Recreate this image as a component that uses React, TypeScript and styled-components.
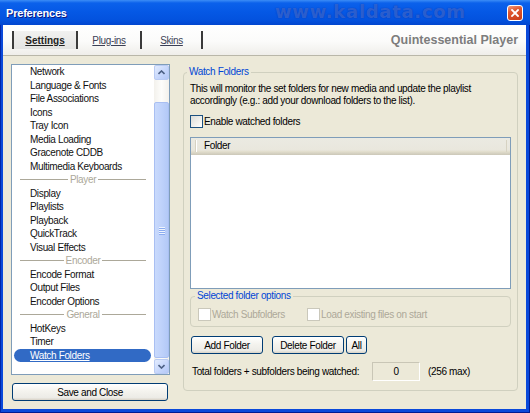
import React from "react";
import styled, { createGlobalStyle, css } from "styled-components";

const uiFont = css`
  font-family: "Liberation Sans", Arial, sans-serif;
  font-size: 10px;
  letter-spacing: -0.35px;
`;

const GlobalStyle = createGlobalStyle`
  html, body { margin: 0; padding: 0; background: #ffffff; }
  #root { width: 530px; height: 413px; overflow: hidden; }
  *, *::before, *::after { box-sizing: border-box; }
`;

/* ---------- window frame ---------- */

const Window = styled.div`
  width: 530px;
  height: 413px;
  display: flex;
  flex-direction: column;
  background: #0A49DA;
  box-shadow: inset 1px 0 0 #0026a8, inset -1px 0 0 #001b91, inset 0 -1px 0 #001b91;
`;

const TitleBar = styled.div`
  position: relative;
  flex: none;
  height: 25px;
  display: flex;
  align-items: center;
  padding: 0 7px 0 6px;
  background: linear-gradient(
    180deg,
    #3c8df6 0px,
    #0b61eb 3px,
    #0558e5 12px,
    #0352de 20px,
    #0246cf 25px
  );
  overflow: hidden;
`;

const TitleText = styled.span`
  font-family: "Liberation Sans", Arial, sans-serif;
  font-weight: bold;
  font-size: 11px;
  letter-spacing: -0.2px;
  color: #ffffff;
  text-shadow: 1px 1px 0 #0a1883;
`;

const Watermark = styled.span`
  position: absolute;
  left: 275px;
  top: 1px;
  font-family: "DejaVu Sans", Verdana, sans-serif;
  font-weight: bold;
  font-size: 18px;
  letter-spacing: 0.7px;
  color: rgba(80, 135, 240, 0.55);
  text-shadow: 0 0 1px rgba(0, 30, 140, 0.7);
  pointer-events: none;
`;

const CloseButton = styled.button`
  margin-left: auto;
  width: 16px;
  height: 16px;
  padding: 0;
  border: 1px solid #ffffff;
  border-radius: 3px;
  background: linear-gradient(160deg, #f39b7e 0%, #e0582f 35%, #c93b17 100%);
  display: flex;
  align-items: center;
  justify-content: center;
`;

const Client = styled.div`
  flex: 1;
  min-height: 0;
  margin: 0 4px 4px 3px;
  display: flex;
  flex-direction: column;
`;

/* ---------- header with tabs ---------- */

const Header = styled.div`
  flex: none;
  height: 31px;
  display: flex;
  align-items: center;
  padding: 0 8px 0 9px;
  background: linear-gradient(180deg, #ffffff 0%, #fbfbfa 55%, #efeeea 100%);
  border-bottom: 1px solid #b9b7a9;
`;

const TabStrip = styled.div`
  display: flex;
  height: 18px;
  border-right: 2px solid #3a3a3a;
`;

const Tab = styled.a<{ $active?: boolean; $w: number }>`
  width: ${(p) => p.$w}px;
  height: 18px;
  display: flex;
  align-items: center;
  justify-content: center;
  border-left: 2px solid #3a3a3a;
  ${uiFont};
  color: ${(p) => (p.$active ? "#222222" : "#3b3f55")};
  font-weight: ${(p) => (p.$active ? "bold" : "normal")};
  letter-spacing: ${(p) => (p.$active ? "0" : "-0.35px")};
  text-decoration: underline;
  background: ${(p) =>
    p.$active ? "linear-gradient(180deg, #f1f1f0 0%, #e4e4e2 100%)" : "transparent"};
`;

const Brand = styled.span`
  margin-left: auto;
  font-family: "Liberation Sans", Arial, sans-serif;
  font-weight: bold;
  font-size: 12.5px;
  color: #7d7d7d;
`;

/* ---------- body ---------- */

const Body = styled.div`
  flex: 1;
  min-height: 0;
  display: flex;
  gap: 13px;
  padding: 8px;
  background: #ece9d8;
`;

const LeftColumn = styled.div`
  width: 159px;
  flex: none;
  display: flex;
  flex-direction: column;
  gap: 8px;
`;

const ListBox = styled.div`
  height: 311px;
  display: flex;
  border: 1px solid #7f9db9;
  background: #ffffff;
`;

const Rows = styled.div`
  flex: 1;
  min-width: 0;
  display: flex;
  flex-direction: column;
`;

const Item = styled.div<{ $selected?: boolean }>`
  height: 13.5px;
  line-height: 13.5px;
  margin: 0 3px 0 2px;
  padding-left: 16px;
  border-radius: 7px;
  white-space: nowrap;
  ${uiFont};
  color: ${(p) => (p.$selected ? "#ffffff" : "#111111")};
  background: ${(p) => (p.$selected ? "#316ac5" : "transparent")};
  text-decoration: ${(p) => (p.$selected ? "underline" : "none")};
`;

const SectionLabel = styled.div`
  height: 13.5px;
  margin: 0 8px;
  display: flex;
  align-items: center;
  gap: 2px;
  ${uiFont};
  color: #aca899;
  &::before,
  &::after {
    content: "";
    flex: 1;
    height: 1px;
    background: #aca899;
  }
`;

/* scroll bar */

const ScrollBar = styled.div`
  width: 15px;
  flex: none;
  display: flex;
  flex-direction: column;
  background: linear-gradient(90deg, #f3f1ec 0%, #fdfdfb 50%, #f3f1ec 100%);
`;

const ArrowButton = styled.div`
  height: 15px;
  flex: none;
  display: flex;
  align-items: center;
  justify-content: center;
  border: 1px solid #b9cbf3;
  border-radius: 2px;
  background: linear-gradient(135deg, #e3ecfe 0%, #c4d5fb 60%, #b4c8f6 100%);
`;

const ScrollTrack = styled.div`
  flex: 1;
  display: flex;
  flex-direction: column;
  padding: 22px 0 1px;
`;

const Thumb = styled.div`
  flex: 1;
  display: flex;
  flex-direction: column;
  align-items: center;
  justify-content: center;
  gap: 1px;
  border: 1px solid #a9bff2;
  border-radius: 2px;
  background: linear-gradient(90deg, #c9dafc 0%, #bfd2fb 50%, #b3c9f7 100%);
`;

const Grip = styled.span`
  width: 6px;
  height: 1px;
  background: #eef4fe;
  box-shadow: 0 1px 0 #8cacf0;
`;

/* push buttons */

const PushButton = styled.button<{ $w: number }>`
  width: ${(p) => p.$w}px;
  height: 18px;
  flex: none;
  padding: 0;
  border: 1px solid #003c74;
  border-radius: 3px;
  background: linear-gradient(180deg, #ffffff 0%, #f4f3ee 45%, #ecebe6 85%, #d8d2c6 100%);
  ${uiFont};
  color: #000000;
`;

const SaveButton = styled(PushButton)`
  margin-left: 1px;
`;

/* group boxes */

const GroupBox = styled.fieldset`
  flex: 1;
  min-width: 0;
  height: 325px;
  margin: 2px 0 0 0;
  padding: 0 6px;
  border: 1px solid #d0d0bf;
  border-radius: 4px;
  display: flex;
  flex-direction: column;
`;

const Legend = styled.legend`
  margin-left: -3px;
  padding: 0 2px;
  line-height: 12px;
  ${uiFont};
  color: #0046d5;
`;

const Description = styled.p`
  margin: 5px 0 0;
  line-height: 12px;
  ${uiFont};
  color: #000000;
`;

const CheckRow = styled.label<{ $disabled?: boolean }>`
  display: flex;
  align-items: center;
  gap: 1px;
  height: 13px;
  ${uiFont};
  color: ${(p) => (p.$disabled ? "#aca899" : "#000000")};
  white-space: nowrap;
`;

const EnableRow = styled(CheckRow)`
  margin-top: 8px;
`;

const CheckBox = styled.span<{ $disabled?: boolean }>`
  width: 13px;
  height: 13px;
  flex: none;
  border: 1px solid ${(p) => (p.$disabled ? "#cac8bb" : "#1c5180")};
  background: ${(p) =>
    p.$disabled ? "#ffffff" : "linear-gradient(135deg, #dcdcd7 0%, #f5f5f2 70%, #ffffff 100%)"};
`;

const FolderList = styled.div`
  margin-top: 9px;
  height: 152px;
  flex: none;
  border: 1px solid #7f9db9;
  background: #ffffff;
`;

const ListHeader = styled.div`
  height: 17px;
  display: flex;
  align-items: center;
  padding: 0 3px 0 4px;
  background: linear-gradient(180deg, #ebeae2 0%, #e9e7dd 70%, #e2decd 80%, #d6d2c2 90%, #cbc7b8 100%);
`;

const ColumnHead = styled.div`
  flex: 1;
  height: 12px;
  margin-bottom: 2px;
  display: flex;
  align-items: center;
  padding-left: 8px;
  border-left: 1px solid #d6d2c2;
  border-right: 1px solid #d6d2c2;
  box-shadow: inset 1px 0 0 #ffffff;
  ${uiFont};
  color: #000000;
`;

const SubGroup = styled.fieldset`
  margin: 1px 0 0;
  padding: 0 7px 5px;
  border: 1px solid #d0d0bf;
  border-radius: 4px;
  min-width: 0;
`;

const SubGrid = styled.div`
  margin-top: 6px;
  display: grid;
  grid-template-columns: 109px auto;
`;

const ButtonRow = styled.div`
  margin-top: 9px;
  padding-left: 1px;
  display: flex;
  align-items: center;
`;

const DeleteButton = styled(PushButton)`
  margin-left: 9px;
`;

const AllButton = styled(PushButton)`
  margin-left: 2px;
`;

const TotalRow = styled.div`
  margin-top: 8px;
  display: flex;
  align-items: center;
  ${uiFont};
  color: #000000;
`;

const TotalLabel = styled.span`
  width: 182px;
  padding-left: 2px;
  white-space: nowrap;
`;

const CountBox = styled.div`
  width: 48px;
  height: 19px;
  display: flex;
  align-items: center;
  justify-content: center;
  border: 1px solid;
  border-color: #c9c6b6 #ffffff #ffffff #c9c6b6;
  background: #ece9d8;
`;

const MaxNote = styled.span`
  margin-left: 8px;
`;

/* ---------- data ---------- */

type Entry = { label: string; section?: boolean; selected?: boolean };

const entries: Entry[] = [
  { label: "Network" },
  { label: "Language & Fonts" },
  { label: "File Associations" },
  { label: "Icons" },
  { label: "Tray Icon" },
  { label: "Media Loading" },
  { label: "Gracenote CDDB" },
  { label: "Multimedia Keyboards" },
  { label: "Player", section: true },
  { label: "Display" },
  { label: "Playlists" },
  { label: "Playback" },
  { label: "QuickTrack" },
  { label: "Visual Effects" },
  { label: "Encoder", section: true },
  { label: "Encode Format" },
  { label: "Output Files" },
  { label: "Encoder Options" },
  { label: "General", section: true },
  { label: "HotKeys" },
  { label: "Timer" },
  { label: "Watch Folders", selected: true },
];

const Chevron = ({ up }: { up?: boolean }) => (
  <svg width="7" height="5" viewBox="0 0 7 5">
    <polyline
      points={up ? "0.5,4 3.5,1 6.5,4" : "0.5,1 3.5,4 6.5,1"}
      fill="none"
      stroke="#4d6185"
      strokeWidth="1.6"
    />
  </svg>
);

export default function App() {
  return (
    <>
      <GlobalStyle />
      <Window>
        <TitleBar>
          <TitleText>Preferences</TitleText>
          <Watermark>www.kaldata.com</Watermark>
          <CloseButton aria-label="Close">
            <svg width="8" height="8" viewBox="0 0 8 8">
              <path d="M1 1 L7 7 M7 1 L1 7" stroke="#ffffff" strokeWidth="1.8" strokeLinecap="square" />
            </svg>
          </CloseButton>
        </TitleBar>

        <Client>
          <Header>
            <TabStrip>
              <Tab $active $w={64}>Settings</Tab>
              <Tab $w={64}>Plug-ins</Tab>
              <Tab $w={61}>Skins</Tab>
            </TabStrip>
            <Brand>Quintessential Player</Brand>
          </Header>

          <Body>
            <LeftColumn>
              <ListBox>
                <Rows>
                  {entries.map((e) =>
                    e.section ? (
                      <SectionLabel key={e.label}>{e.label}</SectionLabel>
                    ) : (
                      <Item key={e.label} $selected={e.selected}>
                        {e.label}
                      </Item>
                    )
                  )}
                </Rows>
                <ScrollBar>
                  <ArrowButton>
                    <Chevron up />
                  </ArrowButton>
                  <ScrollTrack>
                    <Thumb>
                      <Grip />
                      <Grip />
                      <Grip />
                      <Grip />
                    </Thumb>
                  </ScrollTrack>
                  <ArrowButton>
                    <Chevron />
                  </ArrowButton>
                </ScrollBar>
              </ListBox>
              <SaveButton $w={156}>Save and Close</SaveButton>
            </LeftColumn>

            <GroupBox>
              <Legend>Watch Folders</Legend>
              <Description>
                This will monitor the set folders for new media and update the playlist
                accordingly (e.g.: add your download folders to the list).
              </Description>
              <EnableRow>
                <CheckBox />
                Enable watched folders
              </EnableRow>

              <FolderList>
                <ListHeader>
                  <ColumnHead>Folder</ColumnHead>
                </ListHeader>
              </FolderList>

              <SubGroup>
                <Legend>Selected folder options</Legend>
                <SubGrid>
                  <CheckRow $disabled>
                    <CheckBox $disabled />
                    Watch Subfolders
                  </CheckRow>
                  <CheckRow $disabled>
                    <CheckBox $disabled />
                    Load existing files on start
                  </CheckRow>
                </SubGrid>
              </SubGroup>

              <ButtonRow>
                <PushButton $w={72}>Add Folder</PushButton>
                <DeleteButton $w={72}>Delete Folder</DeleteButton>
                <AllButton $w={21}>All</AllButton>
              </ButtonRow>

              <TotalRow>
                <TotalLabel>Total folders + subfolders being watched:</TotalLabel>
                <CountBox>0</CountBox>
                <MaxNote>(256 max)</MaxNote>
              </TotalRow>
            </GroupBox>
          </Body>
        </Client>
      </Window>
    </>
  );
}
